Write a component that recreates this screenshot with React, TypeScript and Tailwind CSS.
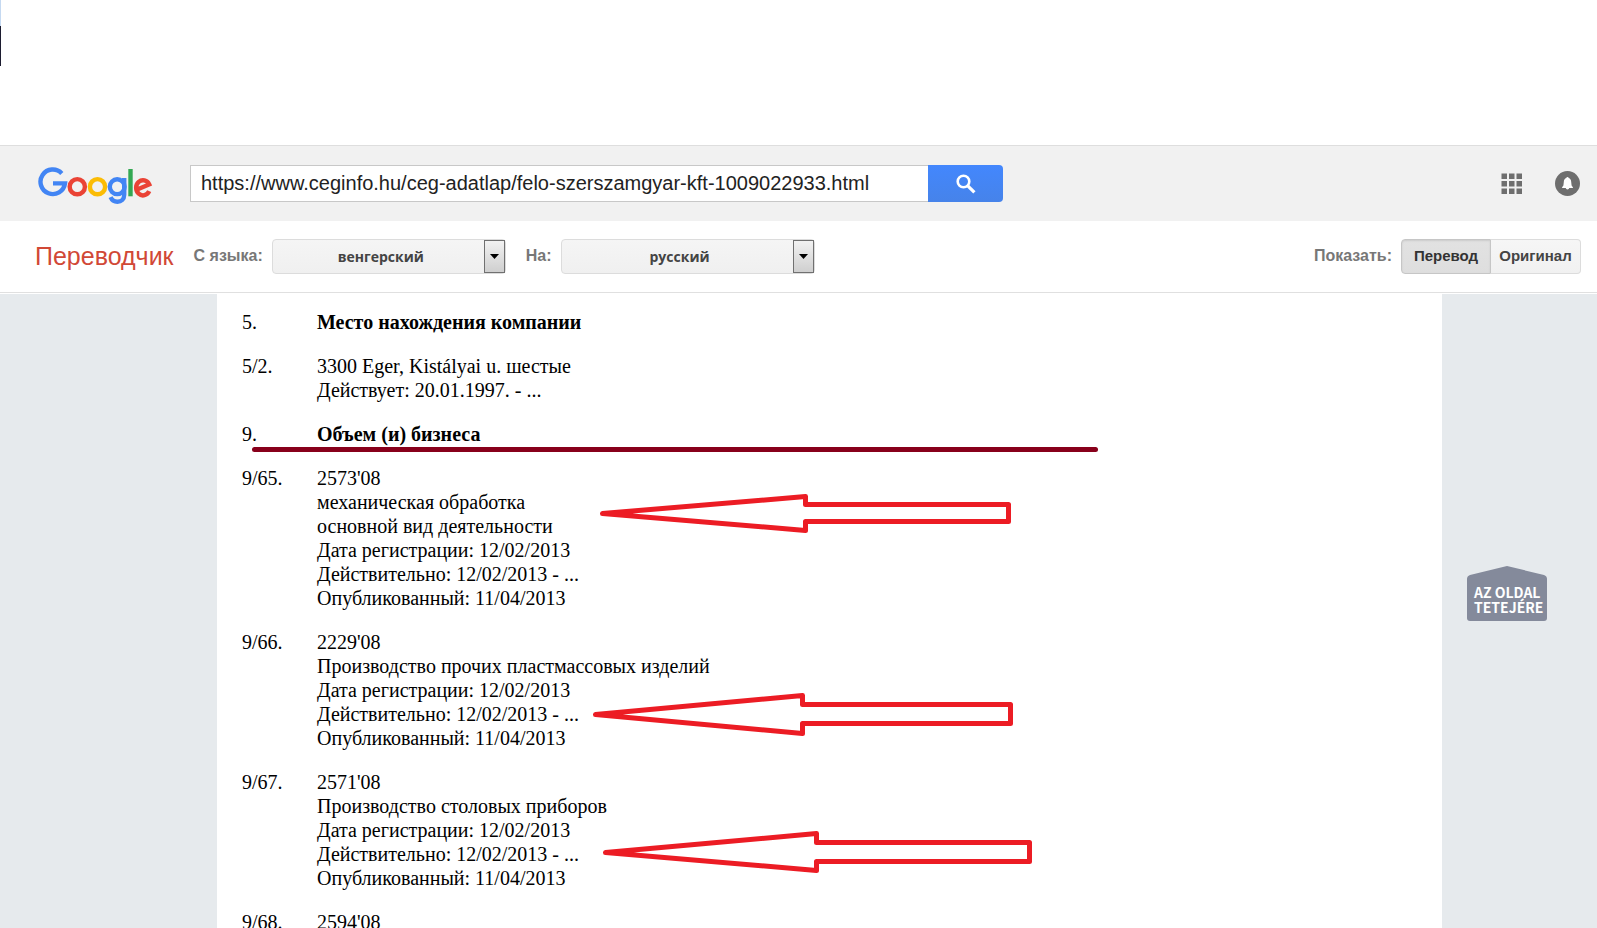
import { useState } from "react";

type Entry = { id: string; title?: string; lines?: string[] };

const entries: Entry[] = [
  { id: "5.", title: "Место нахождения компании" },
  { id: "5/2.", lines: ["3300 Eger, Kistályai u. шестые", "Действует: 20.01.1997. - ..."] },
  { id: "9.", title: "Объем (и) бизнеса" },
  {
    id: "9/65.",
    lines: [
      "2573'08",
      "механическая обработка",
      "основной вид деятельности",
      "Дата регистрации: 12/02/2013",
      "Действительно: 12/02/2013 - ...",
      "Опубликованный: 11/04/2013",
    ],
  },
  {
    id: "9/66.",
    lines: [
      "2229'08",
      "Производство прочих пластмассовых изделий",
      "Дата регистрации: 12/02/2013",
      "Действительно: 12/02/2013 - ...",
      "Опубликованный: 11/04/2013",
    ],
  },
  {
    id: "9/67.",
    lines: [
      "2571'08",
      "Производство столовых приборов",
      "Дата регистрации: 12/02/2013",
      "Действительно: 12/02/2013 - ...",
      "Опубликованный: 11/04/2013",
    ],
  },
  { id: "9/68.", lines: ["2594'08"] },
];

function Logo() {
  return (
    <svg width="116" height="40" viewBox="0 0 116 40" fill="none" strokeWidth="4.4" role="img" aria-label="Google">
      <path d="M23.8 9.4A12.3 12.3 0 1 0 27 19.4H15" stroke="#4285f4" />
      <circle cx="39.3" cy="22.7" r="7.6" stroke="#ea4335" />
      <circle cx="59.5" cy="22.7" r="7.6" stroke="#fbbc05" />
      <circle cx="79.2" cy="22.7" r="7.4" stroke="#4285f4" />
      <path d="M86.2 14V30.7C86.2 35.4 83.2 37.8 79.4 37.8C76 37.8 73.8 36 72.6 33.2" stroke="#4285f4" />
      <path d="M92.5 5V32.3" stroke="#34a853" />
      <path d="M98.6 25.8L111.2 20.4A6.9 7.6 0 1 0 111.2 27.2" stroke="#ea4335" />
    </svg>
  );
}

function LanguageSelect({ id, value, className }: { id: string; value: string; className: string }) {
  return (
    <div
      className={`relative flex h-[35px] rounded-sm border border-[#dcdcdc] bg-linear-to-b from-[#f5f5f5] to-[#f0f0f0] ${className}`}
    >
      <select
        id={id}
        defaultValue={value}
        className="w-full appearance-none bg-transparent pr-4 text-center font-['Open_Sans',sans-serif] text-sm font-bold text-[#444]"
      >
        <option>{value}</option>
      </select>
      <span className="pointer-events-none absolute inset-y-0 right-0 flex w-[21px] items-center justify-center border border-[#707070] bg-linear-to-b from-[#f2f2f2] to-[#cfcfcf]">
        <svg width="9" height="5" viewBox="0 0 9 5">
          <path d="M0 0H9L4.5 5Z" fill="#000" />
        </svg>
      </span>
    </div>
  );
}

function Annotations() {
  return (
    <svg
      className="pointer-events-none absolute top-0 left-0"
      width="900"
      height="620"
      viewBox="217 294 900 620"
      fill="none"
      stroke="#ec1c24"
      strokeWidth="5"
      strokeLinejoin="round"
      aria-hidden="true"
    >
      <path d="M254.5 449.5H1095.5" stroke="#88001b" strokeLinecap="round" />
      <path d="M602.5 513.5L805.5 496.5V504.5H1008.5V521.5H805.5V530.5Z" />
      <path d="M595.5 714.5L802.5 695.5V704.5H1010.5V723.5H802.5V733.5Z" />
      <path d="M605.5 852.5L816.5 833.5V842.5H1029.5V861.5H816.5V870.5Z" />
    </svg>
  );
}

export default function App() {
  const [view, setView] = useState("translation");
  const pressed =
    "bg-linear-to-b from-[#e2e2e2] to-[#dedede] border-[#c6c6c6] text-[#333] shadow-[inset_0_1px_2px_rgba(0,0,0,0.1)]";
  const idle = "bg-linear-to-b from-[#f6f6f6] to-[#f1f1f1] border-[#dcdcdc] text-[#444]";

  return (
    <div className="flex h-screen flex-col overflow-hidden bg-white font-['Liberation_Sans',Arial,sans-serif]">
      <div className="h-[145px] shrink-0">
        <div className="h-[26px] w-px bg-[#c5d9f1]" />
        <div className="h-10 w-px bg-[#1c1c30]" />
      </div>

      <header className="flex h-[76px] shrink-0 items-center border-t border-[#dedede] bg-[#f1f1f1] pr-[17px] pl-[38px]">
        <a href="#google" className="w-[152px]">
          <Logo />
        </a>
        <form className="flex h-[37px]" onSubmit={(e) => e.preventDefault()}>
          <input
            type="text"
            aria-label="URL"
            defaultValue="https://www.ceginfo.hu/ceg-adatlap/felo-szerszamgyar-kft-1009022933.html"
            className="w-[738px] border border-r-0 border-[#c8c8c8] bg-white px-2.5 pb-0.5 text-xl text-[#222]"
          />
          <button
            aria-label="Перевести"
            className="flex w-[75px] items-center justify-center rounded-r-sm bg-linear-to-b from-[#4387fd] to-[#4683ea]"
          >
            <svg width="20" height="20" viewBox="0 0 20 20" fill="none" stroke="#fff">
              <circle cx="7.5" cy="7.5" r="5.8" strokeWidth="2.6" />
              <path d="M11.8 11.8L18.4 18.4" strokeWidth="3.2" />
            </svg>
          </button>
        </form>
        <div className="ml-auto flex items-center gap-8">
          <button aria-label="Приложения">
            <svg width="22" height="22" viewBox="0 0 22 22" fill="#6e6e6e">
              {[0.5, 8, 15.5].map((y) =>
                [0.5, 8, 15.5].map((x) => <rect key={`${x}-${y}`} x={x} y={y} width="5.5" height="5.5" />),
              )}
            </svg>
          </button>
          <button aria-label="Уведомления">
            <svg width="25" height="25" viewBox="0 0 25 25">
              <circle cx="12.5" cy="12.5" r="12.5" fill="#6e6e6e" />
              <path
                d="M12.5 6C13.2 6 13.6 6.4 13.7 7.1C15.4 7.7 16.1 9.2 16.2 11L16.6 14.6L17.9 16.2V17H14.2C14.1 17.9 13.4 18.4 12.5 18.4S10.9 17.9 10.8 17H7.1V16.2L8.4 14.6L8.8 11C8.9 9.2 9.6 7.7 11.3 7.1C11.4 6.4 11.8 6 12.5 6Z"
                fill="#fff"
              />
            </svg>
          </button>
        </div>
      </header>

      <nav className="flex h-[72px] shrink-0 items-center border-b border-[#e0e0e0] pr-4 pl-[35px] text-base font-bold text-[#777]">
        <h1 className="text-[25px] font-normal text-[#d14836]">Переводчик</h1>
        <label htmlFor="from" className="mr-[9px] ml-5 pb-0.5">
          С языка:
        </label>
        <LanguageSelect id="from" value="венгерский" className="w-[234px]" />
        <label htmlFor="to" className="mr-[9px] ml-5 pb-0.5">
          На:
        </label>
        <LanguageSelect id="to" value="русский" className="w-[254px]" />
        <span className="mr-[9px] ml-auto pb-0.5">Показать:</span>
        <div className="flex h-[35px] text-[15px]">
          <button
            onClick={() => setView("translation")}
            className={`w-[90px] rounded-l-sm border ${view === "translation" ? pressed : idle}`}
          >
            Перевод
          </button>
          <button
            onClick={() => setView("original")}
            className={`w-[90px] rounded-r-sm border border-l-0 ${view === "original" ? pressed : idle}`}
          >
            Оригинал
          </button>
        </div>
      </nav>

      <div className="mt-px flex min-h-0 flex-1 bg-[#e6eaed]">
        <main className="relative ml-[217px] flex-1 overflow-hidden bg-white pt-1.5 pl-[25px]">
          <table className="font-['Liberation_Serif',serif] text-xl leading-6 text-black">
            <tbody>
              {entries.map((entry) => (
                <tr key={entry.id} className="align-top">
                  <td className="w-[75px] py-2.5">{entry.id}</td>
                  <td className="py-2.5">
                    {entry.title && <strong>{entry.title}</strong>}
                    {entry.lines?.map((line) => (
                      <div key={line}>{line}</div>
                    ))}
                  </td>
                </tr>
              ))}
            </tbody>
          </table>
          <Annotations />
        </main>
        <aside className="w-[155px] shrink-0 pt-[272px] pl-[25px]">
          <a href="#top" className="relative block h-[55px] w-20">
            <svg className="absolute inset-0" width="80" height="55" viewBox="0 0 80 55" aria-hidden="true">
              <path d="M0 13Q0 10 3 9L40 0L77 9Q80 10 80 13V52Q80 55 77 55H3Q0 55 0 52Z" fill="#848a9b" />
            </svg>
            <span className="relative block pt-[19px] pl-[7px] font-['Noto_Sans_CJK_JP',sans-serif] text-sm leading-[15px] font-bold whitespace-nowrap text-white">
              AZ OLDAL
              <br />
              TETEJÉRE
            </span>
          </a>
        </aside>
      </div>
    </div>
  );
}
